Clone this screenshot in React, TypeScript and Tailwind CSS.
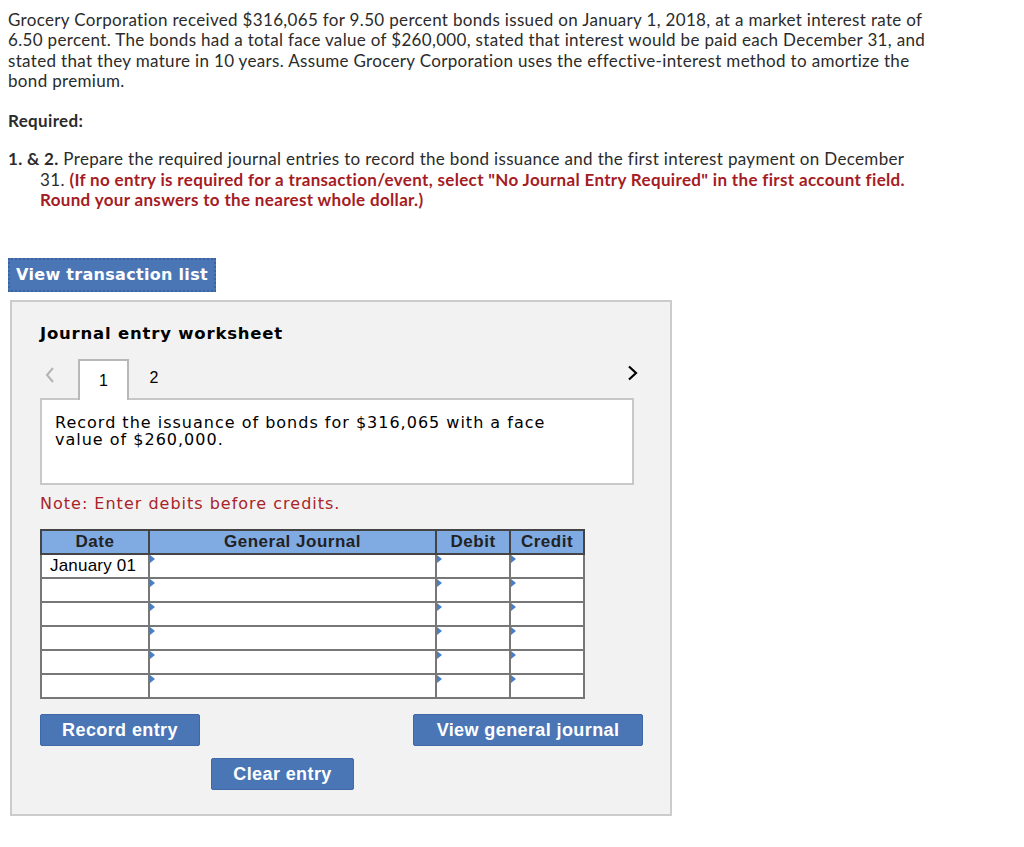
import React from 'react';

const rows = ['January 01', '', '', '', '', ''];

function Marker() {
  return (
    <span className="absolute left-0 top-0 w-0 h-0 border-t-[4px] border-b-[4px] border-l-[5px] border-t-transparent border-b-transparent border-l-[#4a7fc8]" />
  );
}

function BlueButton({ label, className = '' }: { label: string; className?: string }) {
  return (
    <button
      className={`h-[32px] rounded-[2px] bg-[#4a76b6] border border-[#3f68a6] text-white text-[18px] tracking-[0.4px] font-bold font-['Liberation_Sans',Arial,sans-serif] ${className}`}
    >
      {label}
    </button>
  );
}

export default function App() {
  return (
    <div className="w-[1024px] h-[847px] bg-white text-[#222] overflow-hidden">
      {/* QUESTION */}
      <div className="pt-[10px] pl-[8px] w-[1010px] font-['Lato',sans-serif] text-[17px] leading-[20.3px] text-[#2b2b2b] tracking-[0.33px]">
        <p>
          Grocery Corporation received $316,065 for 9.50 percent bonds issued on January 1, 2018, at a market interest rate of
          <br />
          6.50 percent. The bonds had a total face value of $260,000, stated that interest would be paid each December 31, and
          <br />
          stated that they mature in 10 years. Assume Grocery Corporation uses the effective-interest method to amortize the
          <br />
          bond premium.
        </p>
        <p className="font-bold mt-[20px]">Required:</p>
        <div className="mt-[18px] pl-[32px] -indent-[32px]">
          <span className="font-bold">1. &amp; 2.</span> Prepare the required journal entries to record the bond issuance and the first interest payment on December
          <br />
          31.{' '}
          <span className="font-bold text-[#a51c24]">
            (If no entry is required for a transaction/event, select "No Journal Entry Required" in the first account field.
            <br />
            Round your answers to the nearest whole dollar.)
          </span>
        </div>
      </div>

      {/* TRANSACTION LIST BUTTON */}
      <div className="mt-[48px] ml-[8px]">
        <button className="h-[34px] w-[208px] bg-[#4a76b6] outline-dotted outline-2 outline-[#3a63a5] -outline-offset-2 text-white text-[16px] tracking-[0.3px] font-bold font-['DejaVu_Sans',Verdana,sans-serif]">
          View transaction list
        </button>
      </div>

      {/* WORKSHEET PANEL */}
      <div className="mt-[8px] ml-[10px] w-[662px] h-[516px] bg-[#f2f2f2] border-2 border-[#cccccc] pl-[28px] pr-[36px] pt-[20px]">
        <h2 className="font-['DejaVu_Sans',Verdana,sans-serif] font-bold text-[16.5px] tracking-[0.8px] text-black">Journal entry worksheet</h2>

        <div className="mt-[11px] flex items-end h-[40px] relative">
          <span className="w-[38px] pl-[4px] self-center text-[#b3b3b3] mb-[7px]">
            <svg width="12" height="18" viewBox="0 0 12 18" fill="none" stroke="currentColor" strokeWidth="2">
              <path d="M9 2 L3 9 L9 16" />
            </svg>
          </span>
          <div className="w-[51px] h-[41px] bg-white border-2 border-b-0 border-[#b8b8b8] relative z-10 -mb-[2px] flex items-center justify-center font-['Liberation_Sans',Arial,sans-serif] text-[16px] text-black">
            1
          </div>
          <div className="w-[50px] h-[40px] flex items-center justify-center font-['Liberation_Sans',Arial,sans-serif] text-[16px] text-black">
            2
          </div>
          <span className="ml-auto self-center -mr-[4px] text-black mb-[10px]">
            <svg width="12" height="16" viewBox="0 0 12 16" fill="none" stroke="currentColor" strokeWidth="2.2">
              <path d="M3 1.5 L10 8 L3 14.5" />
            </svg>
          </span>
        </div>

        <div className="w-[594px] h-[87px] bg-white border-2 border-[#c8c8c8] px-[13px] pt-[14px] font-['DejaVu_Sans',Verdana,sans-serif] text-[16px] leading-[17px] tracking-[1px] text-black">
          Record the issuance of bonds for $316,065 with a face
          <br />
          value of $260,000.
        </div>

        <p className="mt-[7px] font-['DejaVu_Sans',Verdana,sans-serif] text-[16px] tracking-[1px] text-[#a8242a]">
          Note: Enter debits before credits.
        </p>

        {/* TABLE */}
        <table className="mt-[13px] w-[545px] border-collapse border-2 border-[#777] font-['Liberation_Sans',Arial,sans-serif] text-[17px] text-black">
          <thead>
            <tr className="h-[24px] bg-[#80aae2]">
              <th className="w-[108px] border-2 border-[#444] font-bold text-[#222] tracking-[0.5px] leading-[20px]">Date</th>
              <th className="w-[288px] border-2 border-[#444] font-bold text-[#222] tracking-[0.5px] leading-[20px]">General Journal</th>
              <th className="w-[74px] border-2 border-[#444] font-bold text-[#222] tracking-[0.5px] leading-[20px]">Debit</th>
              <th className="w-[74px] border-2 border-[#444] font-bold text-[#222] tracking-[0.5px] leading-[20px]">Credit</th>
            </tr>
          </thead>
          <tbody>
            {rows.map((d, i) => (
              <tr key={i} className="h-[24px] bg-white">
                <td className="border-2 border-[#777] pl-[8px] leading-[20px] tracking-[0.2px]">{d}</td>
                <td className="border-2 border-[#777] relative"><Marker /></td>
                <td className="border-2 border-[#777] relative"><Marker /></td>
                <td className="border-2 border-[#777] relative"><Marker /></td>
              </tr>
            ))}
          </tbody>
        </table>

        {/* ACTIONS */}
        <div className="mt-[15px] flex justify-between w-[603px]">
          <BlueButton label="Record entry" className="w-[160px]" />
          <BlueButton label="View general journal" className="w-[230px]" />
        </div>
        <div className="mt-[12px] pl-[171px]">
          <BlueButton label="Clear entry" className="w-[143px]" />
        </div>
      </div>
    </div>
  );
}
